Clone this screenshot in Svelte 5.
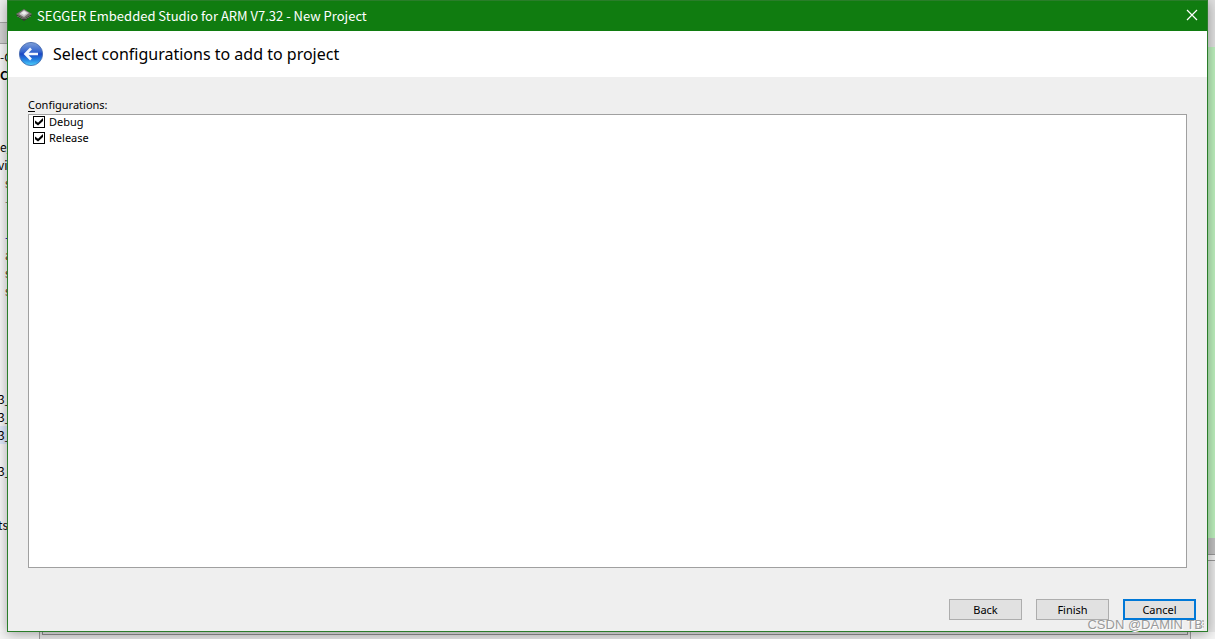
<script>
    let configurations = $state([
        {"name": "Debug", "checked": true},
        {"name": "Release", "checked": true}
    ]);

    // what is left visible of the editor behind the dialog, one entry per line
    const editorLines = [
        {text: "-C"}, {text: "C", kind: "bold"}, {}, {}, {},
        {text: "e_"}, {text: "vie", kind: "cut"}, {text: "s", kind: "indent brown"}, {text: "-", kind: "indent grey"}, {},
        {text: "-", kind: "indent blue"}, {text: "a", kind: "indent brown"}, {text: "s", kind: "indent brown"}, {text: "s", kind: "indent brown"},
        {}, {}, {}, {}, {},
        {text: "3_", kind: "cut"}, {text: "3_", kind: "cut"}, {text: "3_", kind: "cut selected"}, {}, {text: "3_", kind: "cut"},
        {}, {}, {text: "ts", kind: "cut"}
    ];
</script>

<div class="desktop">
    <div class="editor">
        <div class="toolbar"></div>
        <div class="tabs"></div>
        {#each editorLines as line}
            <div class="line {line.kind}">{line.text}</div>
        {/each}
    </div>

    <div class="dialog" role="dialog" aria-labelledby="window-title">
        <div class="titlebar">
            <svg class="app-icon" width="16" height="16" viewBox="0 0 16 16">
                <path d="M0 7 L8 12 L16 7 L15 9 L8 14 L1 9 Z" fill="#3b3537"/>
                <path d="M0 7 L8 2 L16 7 L8 12 Z" fill="#77706f"/>
                <path d="M3 7 L8 3 L13 6 L8 10 Z" fill="#c4c4c4"/>
                <path d="M5 6 L8 4 L11 6 L8 8 Z" fill="#eeeeee"/>
                <path d="M2 9 v1 M4 10 v1 M6 11 v1 M10 11 v1 M12 10 v1 M14 9 v1" stroke="#8e8789"/>
            </svg>
            <span id="window-title">SEGGER Embedded Studio for ARM V7.32 - New Project</span>
            <button class="close" aria-label="Close">
                <svg width="12" height="12" viewBox="0 0 12 12">
                    <path d="M1 1 L11 11 M11 1 L1 11" stroke="#ffffff" stroke-width="1.2"/>
                </svg>
            </button>
        </div>

        <div class="header">
            <button class="previous" aria-label="Previous page">
                <svg width="26" height="26" viewBox="0 0 26 26">
                    <defs>
                        <linearGradient id="ball" x1="0" y1="0" x2="0" y2="1">
                            <stop offset="0" stop-color="#7e9fd8"/>
                            <stop offset="0.4" stop-color="#3566cf"/>
                            <stop offset="0.5" stop-color="#1b46c4"/>
                            <stop offset="0.75" stop-color="#2583e2"/>
                            <stop offset="1" stop-color="#4fd2fb"/>
                        </linearGradient>
                    </defs>
                    <circle cx="13" cy="13" r="11.6" fill="url(#ball)" stroke="#4a6db0" stroke-width="0.9"/>
                    <path d="M20 13 H8 M13 7.5 L7.5 13 L13 18.5" fill="none" stroke="#f4f8ff" stroke-width="2.6"/>
                </svg>
            </button>
            <h1>Select configurations to add to project</h1>
        </div>

        <div class="content">
            <div class="label" id="list-label"><u>C</u>onfigurations:</div>
            <div class="list" role="group" aria-labelledby="list-label">
                {#each configurations as config}
                    <label>
                        <input type="checkbox" bind:checked={config.checked}/>
                        {config.name}
                    </label>
                {/each}
            </div>
        </div>

        <div class="actions">
            <button>Back</button>
            <button>Finish</button>
            <button class="default">Cancel</button>
        </div>

        <svg class="grip" width="8" height="8" viewBox="0 0 8 8">
            <path d="M6 0h2v2h-2z M3 3h2v2h-2z M6 3h2v2h-2z M0 6h2v2h-2z M3 6h2v2h-2z M6 6h2v2h-2z" fill="#bdbdbd"/>
        </svg>
    </div>

    <div class="side">
        <div class="side-top"></div>
        <div class="side-code"></div>
        <div class="side-scroll"></div>
        <div class="side-gap"></div>
        <div class="side-panel"></div>
    </div>

    <div class="below">
        <div class="panel"></div>
    </div>

    <div class="watermark">CSDN @DAMIN TB</div>
</div>

<style>
    :global(body) {
        margin: 0;
    }

    .desktop {
        position: relative;
        display: grid;
        grid-template-columns: 7px minmax(0, 1fr) 7px;
        grid-template-rows: minmax(0, 1fr) 7px;
        height: 100vh;
        overflow: hidden;
        background-color: #f5f5f5;
        font-family: "Noto Sans", "Open Sans", sans-serif;
        font-size: 11px;
        color: #000000;
    }

    .editor {
        background-color: #f8f8f8;
        overflow: hidden;
        font-family: "Noto Sans CJK SC", "Noto Sans", sans-serif;
        font-size: 12px;
    }

    .toolbar {
        height: 22px;
        background-color: #eeeeee;
        border-bottom: 1px solid #a5a5a5;
    }

    .tabs {
        height: 20px;
        background-color: #d2d2d2;
        border-bottom: 1px solid #a5a5a5;
        margin-bottom: 4px;
    }

    .line {
        height: 18px;
        line-height: 18px;
        white-space: nowrap;
    }

    .bold {
        font-weight: bold;
    }

    .cut {
        text-indent: -2px;
    }

    .indent {
        padding-left: 5px;
    }

    .brown {
        color: #6a3a18;
    }

    .blue {
        color: #0000c0;
    }

    .grey {
        color: #808080;
    }

    .selected {
        background-color: #e0eafc;
    }

    .dialog {
        position: relative;
        z-index: 1;
        display: flex;
        flex-direction: column;
        background-color: #efefef;
        border: 1px solid #2a7d2a;
        border-top: 0;
        box-shadow: 0 2px 12px rgba(0, 0, 0, 0.35);
    }

    button {
        font: inherit;
        color: inherit;
        padding: 0;
    }

    .titlebar {
        display: flex;
        align-items: center;
        height: 31px;
        padding: 0 9px 2px 8px;
        box-sizing: border-box;
        border-top: 1px solid #2a7d2a;
        background-color: #107c10;
        color: #ffffff;
    }

    #window-title {
        flex: 1;
        margin-left: 5px;
        font-family: "Noto Sans CJK SC", "Noto Sans", sans-serif;
        font-size: 13px;
    }

    .close {
        display: flex;
        border: 0;
        background: none;
    }

    .header {
        display: flex;
        align-items: center;
        height: 46px;
        padding: 0 10px;
        gap: 9px;
        background-color: #ffffff;
    }

    .previous {
        display: flex;
        border: 0;
        background: none;
    }

    h1 {
        margin: 0;
        font-size: 16px;
        font-weight: normal;
    }

    .content {
        flex: 1;
        display: flex;
        flex-direction: column;
        padding: 20px 20px 0;
    }

    .label {
        height: 17px;
        line-height: 16px;
    }

    u {
        text-underline-offset: 2px;
    }

    .list {
        flex: 1;
        padding: 0 4px;
        border: 1px solid #a0a0a0;
        background-color: #ffffff;
    }

    .list label {
        display: flex;
        align-items: center;
        gap: 4px;
        box-sizing: border-box;
        height: 16px;
        padding-bottom: 2px;
        line-height: 14px;
    }

    .list input {
        appearance: none;
        box-sizing: border-box;
        width: 12px;
        height: 12px;
        margin: 0;
        border: 1px solid #000000;
        background-color: #ffffff;
    }

    .list input:checked::before {
        content: "";
        display: block;
        width: 8px;
        height: 8px;
        margin: 1px;
        background-color: #000000;
        clip-path: polygon(0 30%, 38% 58%, 100% 0, 100% 36%, 38% 95%, 0 65%);
    }

    .actions {
        display: flex;
        justify-content: flex-end;
        gap: 14px;
        padding: 31px 11px 11px;
    }

    .actions button {
        width: 73px;
        height: 21px;
        border: 1px solid #adadad;
        background-color: #e1e1e1;
        line-height: 16px;
    }

    .actions .default {
        border: 2px solid #0078d7;
    }

    .grip {
        position: absolute;
        right: 3px;
        bottom: 3px;
    }

    .side {
        display: flex;
        flex-direction: column;
        background-color: #e0e0e0;
    }

    .side-top {
        height: 47px;
        background-color: #e0e0e0;
    }

    .side-code {
        flex: 1;
        background-color: #bdf0bd;
    }

    .side-scroll {
        height: 16px;
        background-color: #c0c0c0;
    }

    .side-gap {
        height: 5px;
        border-top: 1px solid #989898;
        border-bottom: 1px solid #989898;
        background-color: #eeeeee;
    }

    .side-panel {
        height: 71px;
        background-color: #e8e8e8;
    }

    .below {
        grid-column: 1 / -1;
        padding: 0 24px 0 39px;
        background-color: #f5f5f5;
    }

    .panel {
        height: 7px;
        border-left: 1px solid #a0a0a0;
        border-right: 1px solid #a0a0a0;
        background-color: #e8e8e8;
    }

    .panel::before {
        content: "";
        display: block;
        height: 2px;
        margin: 0 2px;
        border: 1px solid #909090;
        border-top: 0;
    }

    .watermark {
        position: absolute;
        z-index: 2;
        right: 12px;
        bottom: 5px;
        font-family: "Liberation Sans", Arial, sans-serif;
        font-size: 13px;
        line-height: 18px;
        color: #9a9a9a;
        text-shadow: 1px 1px 0 #ffffff;
    }
</style>
